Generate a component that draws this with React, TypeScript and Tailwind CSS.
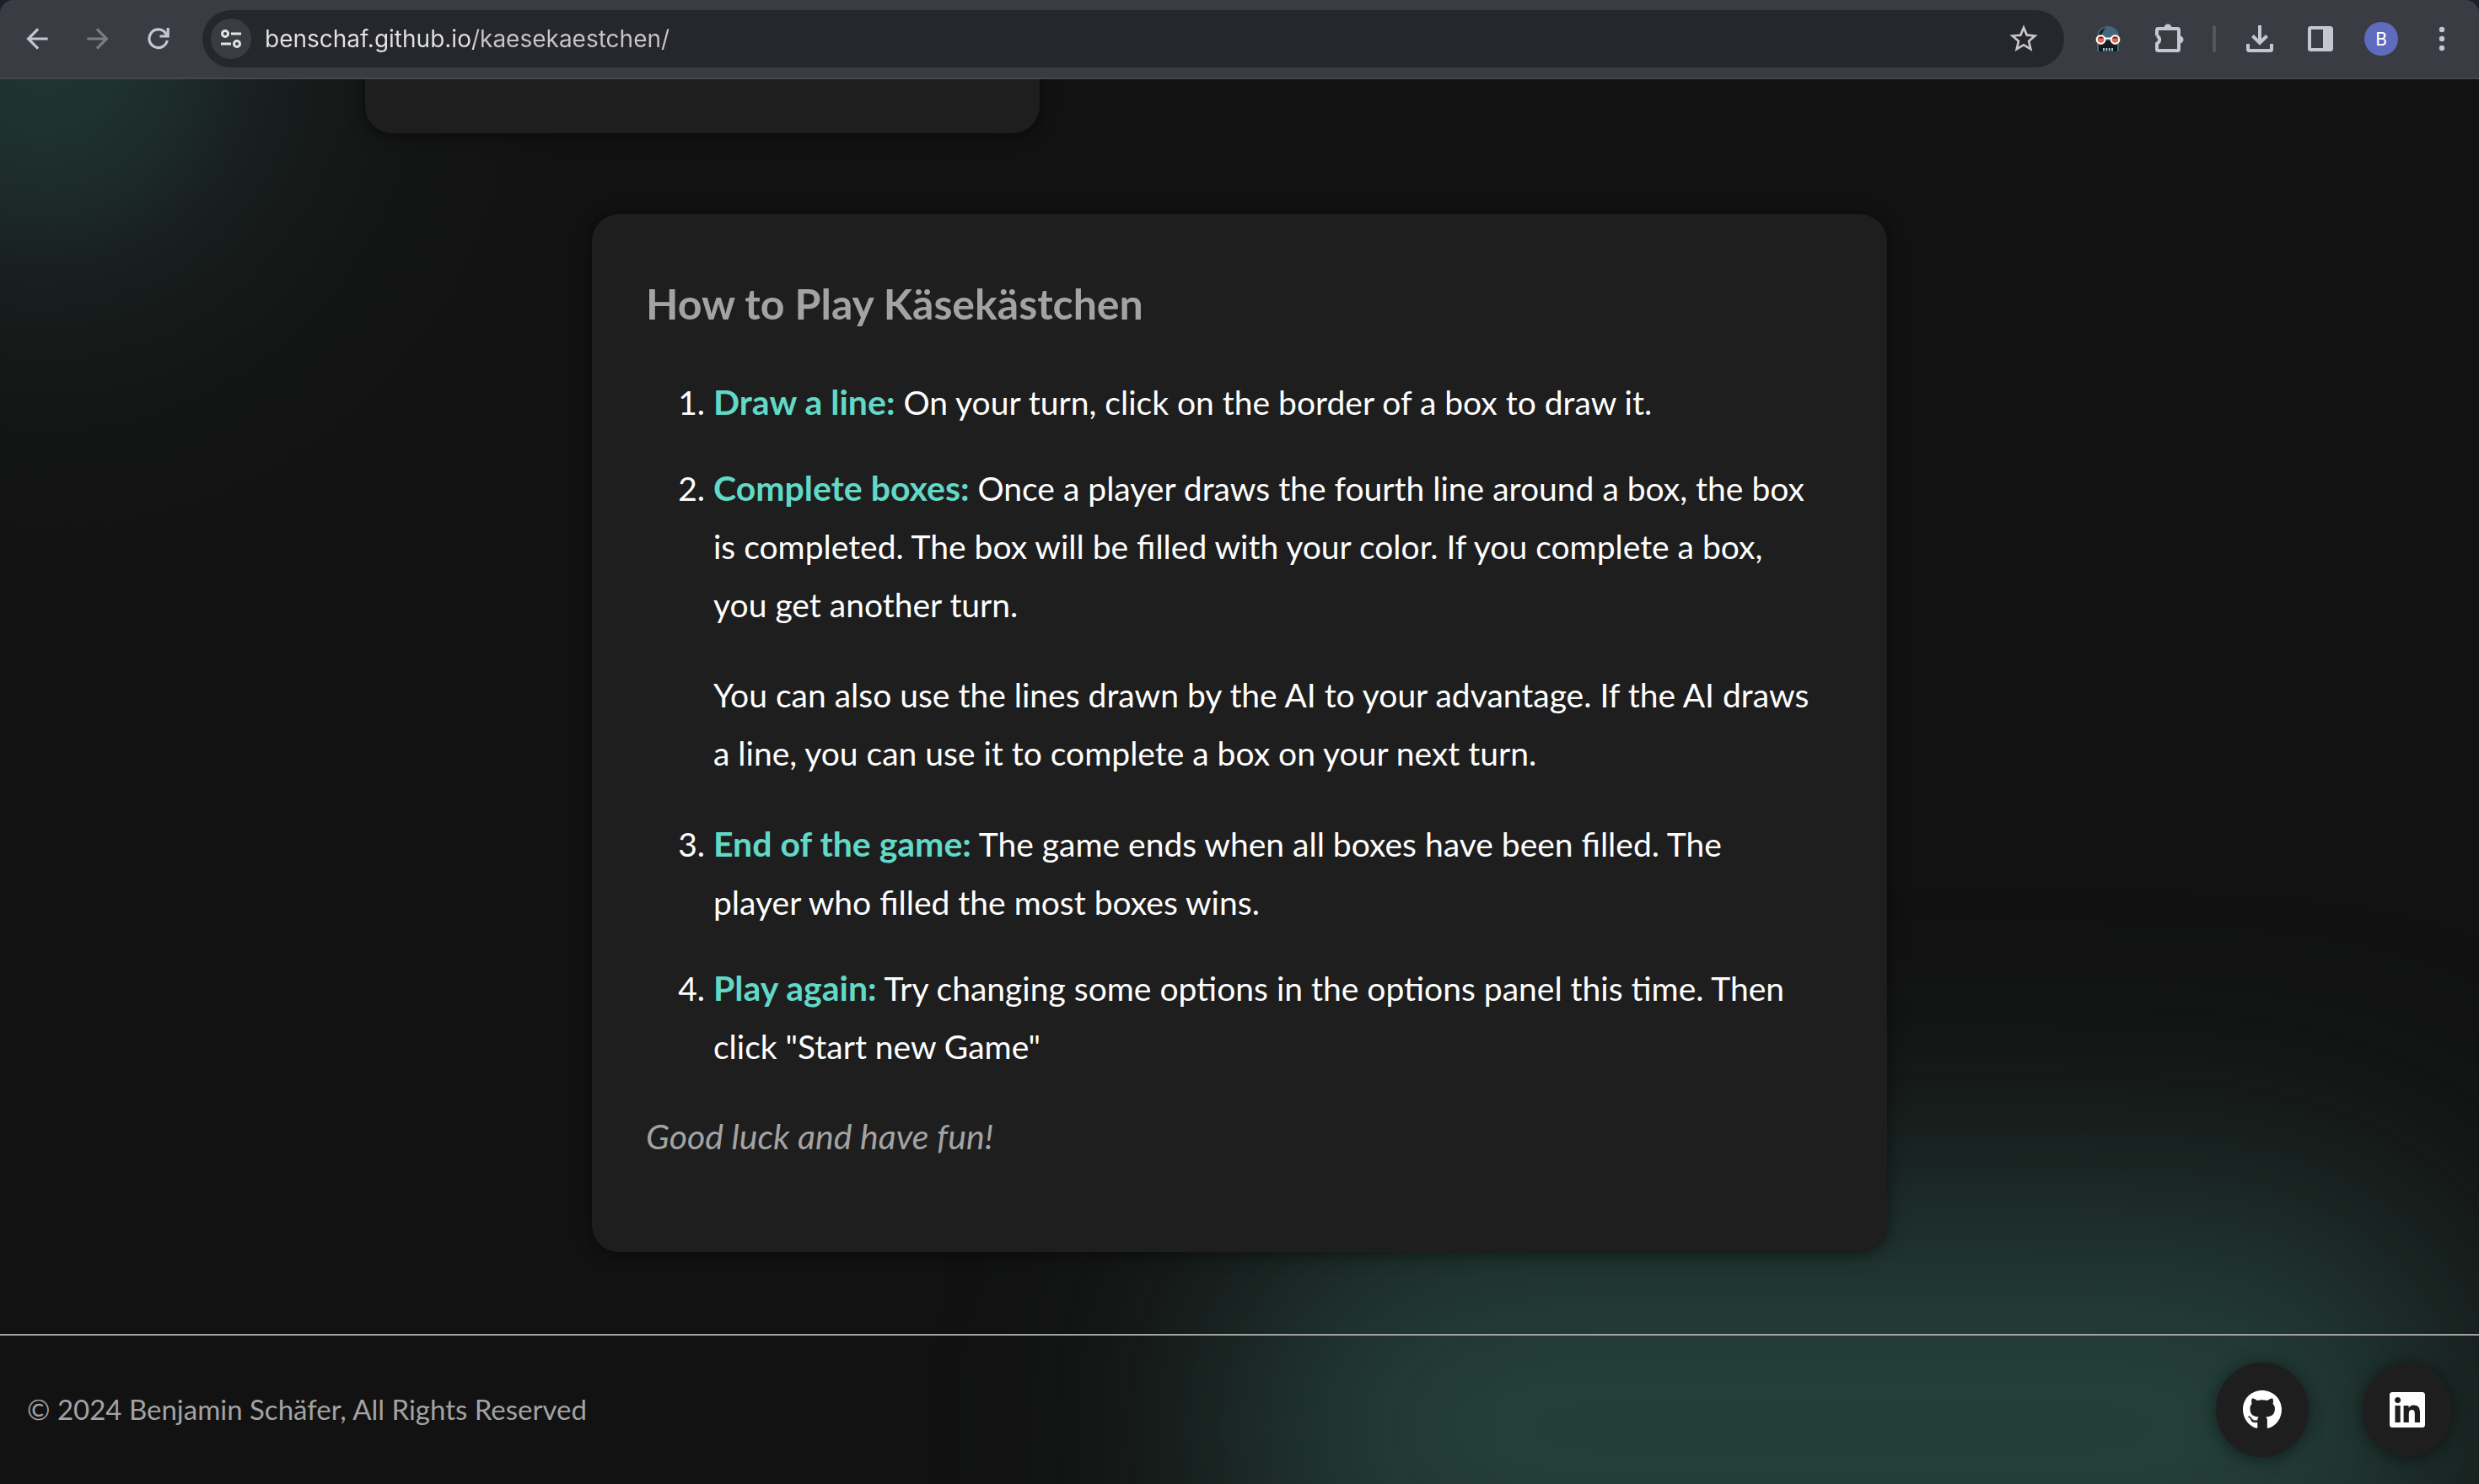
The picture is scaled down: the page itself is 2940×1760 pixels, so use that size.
import { FaGithub, FaLinkedin } from "react-icons/fa";
import { MdArrowBack, MdArrowForward, MdStarBorder } from "react-icons/md";
import type { ReactNode } from "react";

function ReloadIcon() {
  return (
    <svg viewBox="0 0 26 26" className="size-[26px]" fill="none" stroke="currentColor" strokeWidth="3.2">
      <path d="M23.3 15A10.8 10.8 0 1 1 21.5 6.4L24 9.5" />
      <path d="M24.2 0v10H14.5" />
      <path d="M19 7l5-1v4z" fill="currentColor" stroke="none" />
    </svg>
  );
}

function SiteInfoIcon() {
  return (
    <svg viewBox="0 0 24 24" className="size-6" fill="none" stroke="#e3e3e3" strokeWidth="3">
      <circle cx="5" cy="6" r="3.5" />
      <path d="M12 6h12M0 18h12" />
      <circle cx="19" cy="18" r="3.5" />
    </svg>
  );
}

function SkullIcon() {
  return (
    <svg viewBox="0 0 32 30" className="h-[30px] w-8">
      <path d="M3 13C3 5 9 0 16 0s13 5 13 13v17H3z" fill="#41697a" />
      <path d="M5 12C5 6 9 3 14 2 11 4 9 7 8.500 12z" fill="#121a22" />
      <path d="M5 17h22v13H5z" fill="#141b22" />
      <circle cx="7.500" cy="16" r="6.400" fill="#e0694a" opacity="0.4" />
      <circle cx="24.500" cy="16" r="6.400" fill="#e0694a" opacity="0.4" />
      <circle cx="7.500" cy="16" r="4.800" fill="#df6c50" stroke="#fff" strokeWidth="2" />
      <circle cx="24.500" cy="16" r="4.800" fill="#df6c50" stroke="#fff" strokeWidth="2" />
      <path d="M4 14.500a4 4 0 0 1 7 0zM21 14.500a4 4 0 0 1 7 0z" fill="#4a2f30" />
      <path d="M12 14.500h8" stroke="#fff" strokeWidth="2" />
      <path d="M11 26v3.500M14.300 26v3.500M17.600 26v3.500M21 26v3.500" stroke="#a5d4dc" strokeWidth="1.800" />
    </svg>
  );
}

function PuzzleIcon() {
  return (
    <svg viewBox="-1 1 36 36" className="size-9" fill="none" stroke="currentColor" strokeWidth="4">
      <path d="M3 15V8.500Q3 7 4.500 7H27.500Q29 7 29 8.500V31.500Q29 33 27.500 33H4.500Q3 33 3 31.500V25A5.200 5.200 0 0 0 3 15Z" strokeLinejoin="round" stroke="none" />
      <path d="M3 15.500V8.500Q3 7 4.500 7H27.500Q29 7 29 8.500V31.500Q29 33 27.500 33H4.500Q3 33 3 31.500V24.500A4.800 4.800 0 0 0 3 15.500" strokeLinejoin="round" />
      <path d="M11.500 6a4.500 4.500 0 0 1 9 0zM30 15.500a4.500 4.500 0 0 1 0 9z" fill="currentColor" stroke="none" />
    </svg>
  );
}

function DownloadIcon() {
  return (
    <svg viewBox="0 0 32 32" className="size-8" fill="none" stroke="currentColor" strokeWidth="4">
      <path d="M16 0v20M7.500 12.500l8.500 8.500 8.500-8.500" />
      <path d="M2 22v6.500Q2 30 3.500 30h25Q30 30 30 28.500V22" />
    </svg>
  );
}

function SidePanelIcon() {
  return (
    <svg viewBox="0 0 30 30" className="size-[30px]">
      <rect x="2" y="2" width="26" height="26" rx="1.500" fill="none" stroke="currentColor" strokeWidth="4" />
      <path d="M18 2h10v26H18z" fill="currentColor" />
    </svg>
  );
}

function MenuIcon() {
  return (
    <svg viewBox="0 0 8 30" className="h-[30px] w-2" fill="currentColor">
      <circle cx="4" cy="4" r="3.200" />
      <circle cx="4" cy="15" r="3.200" />
      <circle cx="4" cy="26" r="3.200" />
    </svg>
  );
}

function ToolButton({ label, children }: { label: string; children: ReactNode }) {
  return (
    <button aria-label={label} className="flex size-10 items-center justify-center">
      {children}
    </button>
  );
}

const steps = [
  { title: "Draw a line:", text: "On your turn, click on the border of a box to draw it." },
  {
    title: "Complete boxes:",
    text: "Once a player draws the fourth line around a box, the box is completed. The box will be filled with your color. If you complete a box,\nyou get another turn.",
    extra:
      "You can also use the lines drawn by the AI to your advantage. If the AI draws a line, you can use it to complete a box on your next turn.",
  },
  { title: "End of the game:", text: "The game ends when all boxes have been filled. The\nplayer who filled the most boxes wins." },
  { title: "Play again:", text: 'Try changing some options in the options panel this time. Then click "Start new Game"' },
];

export default function App() {
  return (
    <div className="flex min-h-screen flex-col bg-[#121212] font-['Lato',sans-serif] text-white">
      <div className="bg-[#1c1e2a]">
        <header className="flex h-[94px] items-center rounded-t-2xl border-b-2 border-[#474747] bg-[#3a3c44] px-6 text-[#c4c7d0]">
          <div className="flex items-center gap-8">
            <ToolButton label="Back"><MdArrowBack className="size-[38px]" /></ToolButton>
            <ToolButton label="Forward"><MdArrowForward className="size-[38px] text-[#7d7d80]" /></ToolButton>
            <ToolButton label="Reload"><ReloadIcon /></ToolButton>
          </div>
          <div className="ml-8 flex h-[68px] flex-1 items-center rounded-full bg-[#26272c] pr-7 pl-[10px]">
            <button aria-label="Site information" className="flex size-12 items-center justify-center rounded-full bg-[#3a3c44]">
              <SiteInfoIcon />
            </button>
            <input
              aria-label="Address"
              defaultValue="benschaf.github.io/kaesekaestchen/"
              className="ml-4 min-w-0 flex-1 bg-linear-to-r from-[#e3e3e3] from-[248px] to-[#c7c7c7] to-[248px] bg-clip-text font-['Inter',sans-serif] text-[28px] text-transparent outline-none"
            />
            <button aria-label="Bookmark" className="text-[#c7c7c7]"><MdStarBorder className="size-10" /></button>
          </div>
          <div className="ml-8 flex items-center gap-8">
            <ToolButton label="Skull extension"><SkullIcon /></ToolButton>
            <ToolButton label="Extensions"><PuzzleIcon /></ToolButton>
            <span className="h-8 w-1 rounded-full bg-[#55575e]" />
            <ToolButton label="Downloads"><DownloadIcon /></ToolButton>
            <ToolButton label="Side panel"><SidePanelIcon /></ToolButton>
            <button aria-label="Profile" className="size-10 rounded-full bg-[#5f6bbd] font-['Roboto',sans-serif] text-[22px] text-white">B</button>
            <ToolButton label="Menu"><MenuIcon /></ToolButton>
          </div>
        </header>
      </div>
      <div className="relative isolate flex flex-1 flex-col overflow-hidden bg-[radial-gradient(circle_620px_at_50px_-30px,#1f352f,#1f332e_12%,#1c2b28_27%,#181f1f_42%,#151918_57%,#131514_75%,#121212)]">
        <div className="absolute right-5 -bottom-[210px] -z-10 h-[555px] w-1/2 rounded-[240px] bg-[#25413b] blur-[150px]" />
        <main className="flex flex-1 flex-col gap-24 pb-24">
          <div className="-mt-8 ml-[433px] h-24 w-[800px] rounded-b-4xl bg-[#1e1e1e] shadow-[0_2px_20px_rgba(0,0,0,0.5)]" />
          <section className="mx-auto w-full max-w-[1536px] rounded-4xl bg-[#1e1e1e] px-16 pt-16 pb-[103px] shadow-[0_2px_20px_rgba(0,0,0,0.5)]">
            <h1 className="text-[50px] leading-[84px] font-bold text-[#a3a3a3]">How to Play Käsekästchen</h1>
            <ol className="mt-10 flex list-decimal flex-col gap-8 pl-20 text-[39px] leading-[69px]">
              {steps.map((s) => (
                <li key={s.title} className="whitespace-pre-line">
                  <strong className="text-[41px] text-[#62d9c7]">{s.title}</strong> {s.text}
                  {s.extra && <p className="mt-[38px] mb-[6px]">{s.extra}</p>}
                </li>
              ))}
            </ol>
            <p className="mt-[37px] text-[41px] leading-[69px] text-[#a3a3a3] italic">Good luck and have fun!</p>
          </section>
        </main>
        <footer className="flex items-center border-t-2 border-[#a3a3a3] p-8">
          <p className="flex-1 text-[33px] text-[#a3a3a3]">© 2024 Benjamin Schäfer, All Rights Reserved</p>
          <div className="flex gap-16">
            <a href="#github" aria-label="GitHub" className="rounded-[50%] bg-[#1e1e1e] p-8 shadow-[0_2px_20px_rgba(0,0,0,0.5)]"><FaGithub className="h-12 w-[46px]" /></a>
            <a href="#linkedin" aria-label="LinkedIn" className="rounded-[50%] bg-[#1e1e1e] p-8 shadow-[0_2px_20px_rgba(0,0,0,0.5)]"><FaLinkedin className="h-12 w-[42px]" /></a>
          </div>
        </footer>
      </div>
    </div>
  );
}
